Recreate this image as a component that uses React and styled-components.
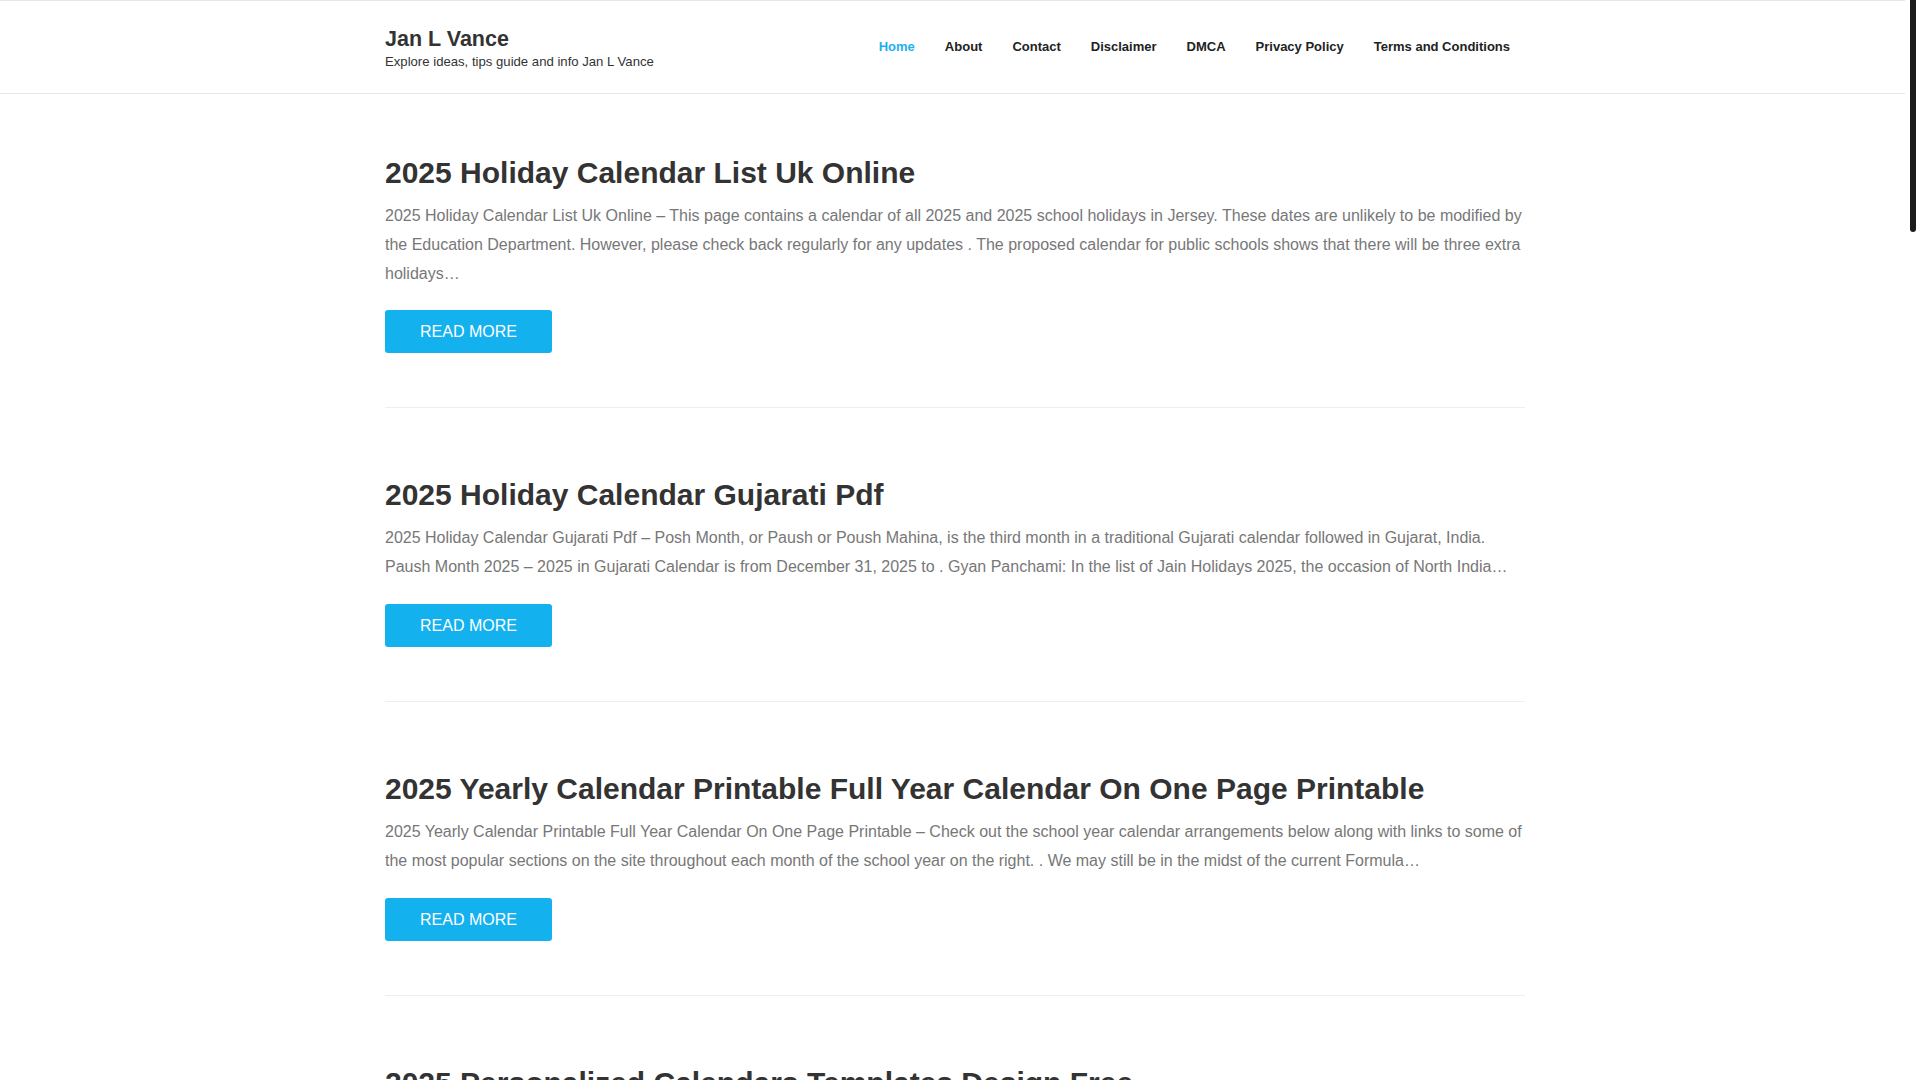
import styled, { createGlobalStyle } from "styled-components";

const GlobalStyled = createGlobalStyle`
  * {
    box-sizing: border-box;
  }
  body {
    margin: 0;
    padding-right: 10px;
    background: #fff;
    font-family: "Liberation Sans", Arial, Helvetica, sans-serif;
    color: #333;
  }
  a {
    text-decoration: none;
  }
`;

// the reference was taken with a classic scrollbar gutter on the right
const ScrollTrack = styled.div`
  position: fixed;
  top: 0;
  right: 0;
  width: 15px;
  height: 100vh;
  background: #fff;
`;

const ScrollThumb = styled.div`
  width: 6px;
  height: 232px;
  margin-left: 5px;
  border-radius: 0 0 3px 3px;
  background: #1b1b1b;
`;

const Header = styled.header`
  border-top: 1px solid #e6e6e6;
  border-bottom: 1px solid #e6e6e6;
  height: 94px;
`;

const Container = styled.div`
  width: 1170px;
  margin: 0 auto;
  padding: 0 15px;
`;

const HeaderInner = styled(Container)`
  display: flex;
  align-items: center;
  justify-content: space-between;
  height: 100%;
`;

const Brand = styled.div`
  display: flex;
  flex-direction: column;
  padding-top: 3px;
`;

const SiteTitle = styled.a`
  font-size: 21.5px;
  font-weight: 700;
  line-height: 26px;
  color: #333;
`;

const Tagline = styled.p`
  margin: 1px 0 0;
  font-size: 13.15px;
  line-height: 18px;
  color: #333;
`;

const Nav = styled.nav`
  display: flex;
`;

const NavLink = styled.a`
  padding: 0 15px;
  font-size: 13px;
  font-weight: 700;
  line-height: 20px;
  color: ${(p) => (p.$active ? "#1cb0ef" : "#222")};
`;

const Main = styled(Container)`
  padding-top: 61px;
  padding-bottom: 40px;
`;

const Post = styled.article`
  padding-bottom: 54px;
  margin-bottom: 69px;
  border-bottom: 1px solid #eee;
`;

const PostTitle = styled.h2`
  margin: 0 0 11px;
  font-size: 30px;
  line-height: 36px;
  font-weight: 700;
  color: #333;
`;

const Excerpt = styled.p`
  margin: 0 0 22px;
  font-size: 16px;
  line-height: 28.8px;
  color: #777;
`;

const ReadMore = styled.a`
  display: inline-block;
  height: 43px;
  padding: 0 35px;
  border-radius: 3px;
  background: #14b1ef;
  color: #fff;
  font-size: 16px;
  line-height: 43px;
  text-transform: uppercase;
`;

const Pager = styled.div`
  display: flex;
  gap: 6px;
  margin-bottom: 60px;
`;

const PageNum = styled.a`
  display: inline-block;
  min-width: 38px;
  height: 38px;
  padding: 0 12px;
  border-radius: 3px;
  background: ${(p) => (p.$current ? "#14b1ef" : "#f2f2f2")};
  color: ${(p) => (p.$current ? "#fff" : "#555")};
  font-size: 14px;
  line-height: 38px;
  text-align: center;
`;

const Footer = styled.footer`
  border-top: 1px solid #e6e6e6;
  padding: 30px 0;
  font-size: 13px;
  color: #777;
`;

const posts = [
  {
    title: "2025 Holiday Calendar List Uk Online",
    excerpt:
      "2025 Holiday Calendar List Uk Online – This page contains a calendar of all 2025 and 2025 school holidays in Jersey. These dates are unlikely to be modified by the Education Department. However, please check back regularly for any updates . The proposed calendar for public schools shows that there will be three extra holidays…",
  },
  {
    title: "2025 Holiday Calendar Gujarati Pdf",
    excerpt:
      "2025 Holiday Calendar Gujarati Pdf – Posh Month, or Paush or Poush Mahina, is the third month in a traditional Gujarati calendar followed in Gujarat, India. Paush Month 2025 – 2025 in Gujarati Calendar is from December 31, 2025 to . Gyan Panchami: In the list of Jain Holidays 2025, the occasion of North India…",
  },
  {
    title: "2025 Yearly Calendar Printable Full Year Calendar On One Page Printable",
    excerpt:
      "2025 Yearly Calendar Printable Full Year Calendar On One Page Printable – Check out the school year calendar arrangements below along with links to some of the most popular sections on the site throughout each month of the school year on the right. . We may still be in the midst of the current Formula…",
  },
  {
    title: "2025 Personalized Calendars Templates Design Free",
    excerpt:
      "2025 Personalized Calendars Templates Design Free – Create a calendar that fits your family, your office or your classroom. Pick a layout, add your own photos and important dates, then print it at home or share it online with friends…",
  },
  {
    title: "2025 Monthly Calendar Printable With Holidays",
    excerpt:
      "2025 Monthly Calendar Printable With Holidays – Plan every month of the year with these free printable pages. Each month shows national holidays and observances so you never miss an important day at work or at school…",
  },
  {
    title: "2025 School Calendar Template Word",
    excerpt:
      "2025 School Calendar Template Word – Teachers and parents can download this editable template and fill in term dates, exams and breaks. The file opens in any recent version of Word and prints nicely on letter or A4 paper…",
  },
  {
    title: "2025 Lunar Calendar Chinese New Year Dates",
    excerpt:
      "2025 Lunar Calendar Chinese New Year Dates – The lunar new year falls on a different day each year. Here you will find the full moon and new moon dates, along with the traditional festivals celebrated across Asia…",
  },
  {
    title: "2025 Calendar With Week Numbers Excel",
    excerpt:
      "2025 Calendar With Week Numbers Excel – A simple spreadsheet that lists every week of the year with its ISO number. Useful for project planning, shift rotas and payroll schedules…",
  },
  {
    title: "2025 Federal Holiday Calendar Opm",
    excerpt:
      "2025 Federal Holiday Calendar Opm – The Office of Personnel Management publishes the list of federal holidays each year. When a holiday falls on a weekend, the observed day moves to the nearest weekday…",
  },
  {
    title: "2025 Desk Calendar Printable Free",
    excerpt:
      "2025 Desk Calendar Printable Free – Fold these pages into a small tent calendar for your desk. Each sheet holds two months and leaves room for notes, birthdays and reminders…",
  },
  {
    title: "2025 Academic Calendar University Planner",
    excerpt:
      "2025 Academic Calendar University Planner – Keep track of semesters, registration deadlines and exam weeks with this planner designed for students. It starts in August and runs through the following summer…",
  },
  {
    title: "2025 Wall Calendar Photo Ideas",
    excerpt:
      "2025 Wall Calendar Photo Ideas – Looking for inspiration for a photo calendar? Seasonal landscapes, family portraits and pet pictures all make great choices for each month of the year…",
  },
  {
    title: "2025 Bank Holiday Calendar India",
    excerpt:
      "2025 Bank Holiday Calendar India – Bank holidays vary from state to state. This list covers the national holidays as well as the regional ones announced by the Reserve Bank of India…",
  },
  {
    title: "2025 Blank Calendar Template Fillable",
    excerpt:
      "2025 Blank Calendar Template Fillable – A clean grid with no holidays marked, ready to be filled in by hand or on your computer. Download the PDF and type directly into each box…",
  },
];

const navItems = [
  "Home",
  "About",
  "Contact",
  "Disclaimer",
  "DMCA",
  "Privacy Policy",
  "Terms and Conditions",
];

const App = () => {
  return (
    <>
      <GlobalStyled />
      <Header>
        <HeaderInner>
          <Brand>
            <SiteTitle href="#">Jan L Vance</SiteTitle>
            <Tagline>Explore ideas, tips guide and info Jan L Vance</Tagline>
          </Brand>
          <Nav>
            {navItems.map((item, i) => (
              <NavLink key={item} href="#" $active={i === 0}>
                {item}
              </NavLink>
            ))}
          </Nav>
        </HeaderInner>
      </Header>
      <Main as="main">
        {posts.map((post) => (
          <Post key={post.title}>
            <PostTitle>{post.title}</PostTitle>
            <Excerpt>{post.excerpt}</Excerpt>
            <ReadMore href="#">Read More</ReadMore>
          </Post>
        ))}
        <Pager>
          <PageNum $current>1</PageNum>
          <PageNum href="#">2</PageNum>
          <PageNum href="#">3</PageNum>
          <PageNum href="#">Next</PageNum>
        </Pager>
      </Main>
      <Footer>
        <Container>Copyright © 2025 Jan L Vance</Container>
      </Footer>
      <ScrollTrack>
        <ScrollThumb />
      </ScrollTrack>
    </>
  );
};

export default App;
